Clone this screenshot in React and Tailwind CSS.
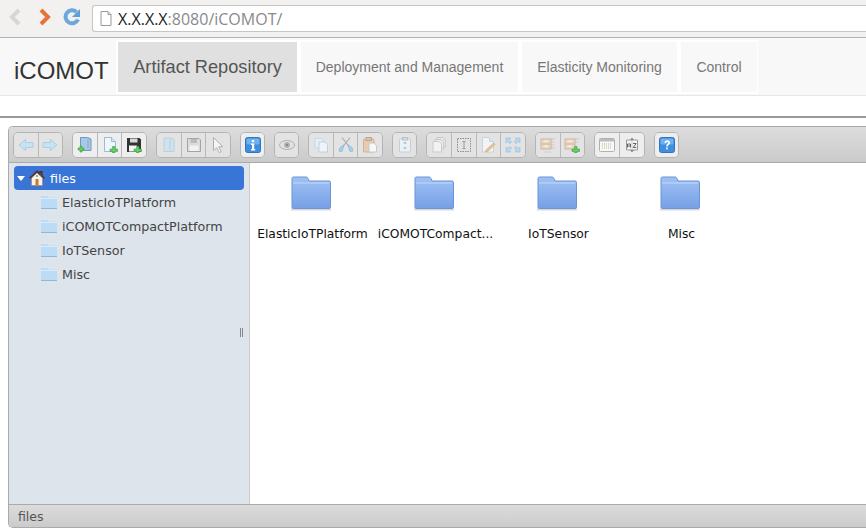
import React from 'react'

const Plus = () => <path d="M10.500 9.500h2.500v2.500h2.500v2.500h-2.500v1.500h-2.500v-1.500h-2.500v-2.500h2.500z" fill="#63cc63" stroke="#3fa34a" strokeWidth=".6" />

const icons = {
  back: <path d="M1 8l6.500-5.500v3h7.500v5h-7.500v3z" fill="#c8e2f0" stroke="#a8cfe4" />,
  forward: <path d="M15 8l-6.500-5.500v3h-7.500v5h7.500v3z" fill="#c8e2f0" stroke="#a8cfe4" />,
  mkdir: <><path d="M3.500.5h7l3.500 1.500v11.500h-10.500z" fill="#a8c8e6" stroke="#6a9ac4" /><path d="M11 2.500v9" stroke="#7fa8d0" /><path d="M3 9h2v2h2v2h-2v2h-2v-2h-2v-2h2z" fill="#63cc63" stroke="#3fa34a" strokeWidth=".6" /></>,
  mkfile: <><path d="M2.500.5h7l4 4v10h-11z" fill="#eef5fb" stroke="#9dbad2" /><path d="M9.500.5v4h4" fill="#d4e3ef" stroke="#9dbad2" /><Plus /></>,
  save: <><path d="M1 1h12.500l1.500 1.500v12.500h-14z" fill="#333" /><rect x="4" y="1.500" width="7.500" height="4" fill="#d8d8d8" /><rect x="3" y="8.500" width="8" height="6" fill="#f4f4f4" /><Plus /></>,
  open: <><path d="M3 1h6.500l3.500 1.500v12h-10z" fill="#d0e2ee" stroke="#b8cfde" /><path d="M9 2v12" stroke="#b8cfde" /></>,
  disk: <><path d="M1.500 1.500h11.500l1.500 1.500v11.500h-13z" fill="#dcdcdc" stroke="#a4a4a4" /><rect x="4.500" y="2" width="6.500" height="4" fill="#bcbcbc" /><rect x="3.500" y="8.500" width="9" height="5.500" fill="#f2f2f2" /></>,
  select: <path d="M3.500 .5v13l3.200-2.800 2.500 5 2-1-2.500-4.900h4.300z" fill="#f4f4f4" stroke="#b0b0b0" />,
  info: <><rect x=".5" y=".5" width="15" height="15" rx="2" fill="#3f8ee0" stroke="#2f74c0" /><rect x="1.500" y="1.500" width="13" height="6" rx="1.500" fill="#6fb0ee" /><rect x="6.800" y="3" width="2.400" height="2.200" fill="#fff" /><path d="M6 6.500h3.200v5.500h1v1.500h-4.200v-1.500h1v-4h-1z" fill="#fff" /></>,
  eye: <><ellipse cx="8" cy="8" rx="7.500" ry="4.500" fill="#e2e2e2" stroke="#b0b0b0" /><circle cx="8" cy="8" r="3" fill="#b4b4b4" /><circle cx="8" cy="8" r="1.300" fill="#8a8a8a" /></>,
  copy: <><path d="M2 1.500h6l2.500 2.500v7h-8.500z" fill="#e8eff4" stroke="#c8d6e0" /><path d="M6 5h6l2.500 2.500v7.500h-8.500z" fill="#f0f4f8" stroke="#c0d0da" /></>,
  cut: <><path d="M4 .5l7 9M12 .5l-7 9" stroke="#a4aeb6" strokeWidth="1.200" /><path d="M6 8l-4 2.500-1 3.500 3 .5zM10 8l4 2.500 1 3.500-3 .5z" fill="#a8d0ea" stroke="#84b4d4" strokeWidth=".7" /></>,
  paste: <><rect x="1.500" y="2" width="10.500" height="13" rx="1" fill="#e6ccb2" stroke="#d0b294" /><rect x="4" y=".5" width="5.500" height="3" fill="#d4c4b2" stroke="#bca890" /><path d="M7 6h5l2.500 2.500v6.500h-7.500z" fill="#f8f8f8" stroke="#c8c8c8" /></>,
  duplicate: <><rect x="2.500" y="2" width="11" height="13" rx="1" fill="#ecf1f5" stroke="#c4cfd8" /><rect x="5.500" y=".5" width="5" height="2.500" fill="#d4dbe0" stroke="#b8c2ca" /><path d="M6.500 6h3M8 4.800v2.400M6.500 11h3M8 9.800v2.400" stroke="#a0bcd4" /></>,
  pages: <><path d="M6 .5h6l2.500 2.500v7h-8.500z" fill="#e6e6e6" stroke="#c8c8c8" /><path d="M4 2.500h6l2.500 2.500v7h-8.500z" fill="#ececec" stroke="#c8c8c8" /><path d="M2 4.500h6l2.500 2.500v8h-8.500z" fill="#f0f2f4" stroke="#c8ccd0" /></>,
  rename: <><rect x="1.500" y="1.500" width="13" height="13" fill="none" stroke="#8c8c8c" strokeDasharray="1.500 1" /><path d="M6.500 4.500h3M6.500 11.500h3M8 4.500v7" stroke="#9a9a9a" /></>,
  edit: <><path d="M2.500 .5h7l4 4v10.500h-11z" fill="#f0f4f7" stroke="#c8d4dc" /><path d="M9.500 .5v4h4" fill="#dce4ea" stroke="#c8d4dc" /><path d="M6 13l7.500-7 1.500 1.500-7.500 7-2 .5z" fill="#ecc890" stroke="#c8a070" strokeWidth=".6" /></>,
  resize: <path d="M1 1h5l-1.600 1.600 2.300 2.300-1.800 1.800-2.300-2.300-1.600 1.600zM15 1v5l-1.600-1.600-2.300 2.300-1.800-1.800 2.300-2.300-1.600-1.600zM1 15v-5l1.600 1.600 2.300-2.300 1.800 1.800-2.300 2.300 1.600 1.600zM15 15h-5l1.600-1.600-2.300-2.300 1.800-1.800 2.300 2.300 1.600-1.600z" fill="#b4daf0" stroke="#90c0dc" strokeWidth=".6" />,
  archive: <><path d="M11 2h4M11 5h3M11 8h3M11 11h4" stroke="#c8c8c8" /><rect x="1" y="2" width="10" height="10" fill="#e8d8c2" stroke="#cdb89e" /><path d="M1 7h10" stroke="#cdb89e" /><rect x="4.500" y="3.500" width="3" height="1.500" fill="#faf4ea" /><rect x="4.500" y="8.500" width="3" height="1.500" fill="#faf4ea" /><path d="M4 15h7" stroke="#d0d0d0" /></>,
  extract: <><path d="M11 2h4M11 5h3" stroke="#c8c8c8" /><rect x="1" y="2" width="10" height="10" fill="#e8d8c2" stroke="#cdb89e" /><path d="M1 7h10" stroke="#cdb89e" /><rect x="4.500" y="3.500" width="3" height="1.500" fill="#faf4ea" /><rect x="4.500" y="8.500" width="3" height="1.500" fill="#faf4ea" /><Plus /></>,
  grid: <><rect x=".5" y="1.500" width="15" height="13" rx="1" fill="#f8f8f8" stroke="#b0b0b0" /><rect x="1" y="2" width="14" height="2.500" fill="#bcbcbc" /><path d="M3 7h10" stroke="#8fb4d8" strokeDasharray="1 1" /><path d="M3 9h10" stroke="#d8b878" strokeDasharray="1 1" /><path d="M3 11h10" stroke="#9ccc9c" strokeDasharray="1 1" /></>,
  sort: <><path d="M2.500 3h11v10h-11z" fill="#f4f4f4" stroke="#9a9a9a" /><path d="M8 .5l2 2.500h-4zM8 15.500l2-2.500h-4z" fill="#888" /><path d="M3.500 10.500v-3.500h3v3.500M3.500 9h3M9 6.500h3.200l-3 4h3.200" fill="none" stroke="#555" strokeWidth=".9" /><path d="M8 3v10" stroke="#aaa" strokeWidth=".5" /></>,
  help: <><rect x=".5" y=".5" width="15" height="15" rx="2" fill="#3f8ee0" stroke="#2f74c0" /><rect x="1.500" y="1.500" width="13" height="6" rx="1.500" fill="#6fb0ee" /><path d="M5.500 6c0-3.500 5.500-3.500 5.500-.2 0 2-2.200 2-2.200 3.700h-1.600c0-2.500 2-2.500 2-3.600 0-1.200-2-1.200-2.100.1z" fill="#fff" /><rect x="7.200" y="10.500" width="1.600" height="1.800" fill="#fff" /></>,
}

const toolbar = [
  { w: 'w-[50px]', items: [['back', true], ['forward', true]] },
  { w: 'w-[75px]', items: [['mkdir'], ['mkfile'], ['save']] },
  { w: 'w-[75px]', items: [['open', true], ['disk', true], ['select', true]] },
  { w: 'w-[25px]', items: [['info']] },
  { w: 'w-[25px]', items: [['eye', true]] },
  { w: 'w-[75px]', items: [['copy', true], ['cut', true], ['paste', true]] },
  { w: 'w-[25px]', items: [['duplicate', true]] },
  { w: 'w-[100px]', items: [['pages', true], ['rename', true], ['edit', true], ['resize', true]] },
  { w: 'w-[50px]', items: [['archive', true], ['extract', true]] },
  { w: 'w-[51px]', items: [['grid'], ['sort']] },
  { w: 'w-[25px]', items: [['help']] },
]

const folders = ['ElasticIoTPlatform', 'iCOMOTCompactPlatform', 'IoTSensor', 'Misc']
const gridNames = ['ElasticIoTPlatform', 'iCOMOTCompact...', 'IoTSensor', 'Misc']

function BigFolder() {
  return (
    <svg className="mr-[3px]" width="42" height="36" viewBox="0 0 42 36">
      <defs>
        <linearGradient id="bigfolder" x1="0" y1="0" x2="0" y2="1">
          <stop offset="0" stopColor="#a0c2f4" />
          <stop offset="1" stopColor="#76a0e6" />
        </linearGradient>
      </defs>
      <rect x="1" y="33.500" width="40" height="2" fill="#d8d8d8" />
      <path d="M2 3.500c0-1 .6-1.500 1.500-1.500h12.500c1 0 1.500.5 2 1.500l1 2.500h20c1 0 1.500.5 1.500 1.500v24.500c0 1-.5 1.500-1.500 1.500h-35.500c-1 0-1.500-.5-1.500-1.500z" fill="url(#bigfolder)" stroke="#6c93d6" />
      <path d="M3 8h36" stroke="#c4d9f8" />
    </svg>
  )
}

function SmallFolder() {
  return (
    <svg width="16" height="14" viewBox="0 0 16 14">
      <path d="M0 1h6l1.500 1.500h8.500v11.500h-16z" fill="#bcdcf6" />
      <path d="M0 3.500h16" stroke="#d8ebfa" />
      <path d="M0 13.500h16" stroke="#8fb8dc" />
    </svg>
  )
}

function HomeIcon() {
  return (
    <svg width="16" height="16" viewBox="0 0 16 16">
      <path d="M2.500 8v7.500h11v-7.500l-5.500-5z" fill="#fbf4e6" stroke="#a08a6c" strokeWidth=".7" />
      <path d="M.7 8.300l7.300-7 3 2.800v-2.300h2v4.200l2.300 2.300" fill="none" stroke="#5a2c1c" strokeWidth="1.400" />
      <rect x="6.500" y="9" width="3" height="6.500" fill="#c07c34" />
      <rect x="7" y="5" width="2" height="2" fill="#8aa8c8" />
    </svg>
  )
}

export default function App() {
  return (
    <div className="flex h-[528px] w-[866px] flex-col overflow-hidden bg-white font-['Liberation_Sans',sans-serif]">
      {/* browser chrome */}
      <div className="flex h-[38px] shrink-0 items-start border-b border-[#b4b4b2] bg-[#f2f1f0] pt-[5px]">
        <div className="flex w-[92px] items-center pt-[3px] pl-[8px]">
          <svg width="14" height="18" viewBox="0 0 14 18"><path d="M11 2l-7 7 7 7" fill="none" stroke="#d6d6d4" strokeWidth="4" /></svg>
          <svg className="ml-[16px]" width="14" height="18" viewBox="0 0 14 18"><path d="M3 2l7 7-7 7" fill="none" stroke="#e2743c" strokeWidth="4" /></svg>
          <svg className="ml-[11px]" width="18" height="18" viewBox="0 0 18 18"><path d="M15 11.500a6.500 6.500 0 1 1-1.500-7.500" fill="none" stroke="#6ca8dc" strokeWidth="4" /><path d="M17 1v8h-8z" fill="#5f9fd8" /></svg>
        </div>
        <div className="flex h-[27px] flex-1 items-center rounded-l-[3px] border border-r-0 border-[#c6c6c6] bg-white pl-[7px]">
          <svg width="12" height="15" viewBox="0 0 12 15"><path d="M1 .5h7l3 3v11h-10z" fill="#fff" stroke="#9a9a9a" /><path d="M8 .5v3h3" fill="#e4e4e4" stroke="#9a9a9a" /></svg>
          <span className="ml-[6px] font-['Open_Sans',sans-serif] text-[16px] text-[#222]">
            X.X.X.X<span className="text-[#8a8a8a]">:8080/iCOMOT/</span>
          </span>
        </div>
      </div>

      {/* app nav */}
      <div className="flex h-[58px] shrink-0 items-start border-b border-[#e7e7e7] bg-[#f8f8f8]">
        <div className="flex h-[57px] w-[116px] items-center pt-[9px] pl-[14px] text-[24px] text-[#333]">iCOMOT</div>
        <div className="mt-[2px] flex h-[54px] gap-[4px] bg-white px-[2px] pt-[2px] pr-[1px]">
          <div className="flex h-[50px] w-[179px] items-center justify-center bg-[#e0e0e0] pt-[2px] text-[18.200px] text-[#555]">Artifact Repository</div>
          <div className="flex h-[50px] w-[217px] items-center justify-center bg-[#f8f8f8] text-[14px] text-[#777]">Deployment and Management</div>
          <div className="flex h-[50px] w-[155px] items-center justify-center bg-[#f8f8f8] text-[14px] text-[#777]">Elasticity Monitoring</div>
          <div className="flex h-[50px] w-[76px] items-center justify-center bg-[#f8f8f8] text-[14px] text-[#777]">Control</div>
        </div>
      </div>

      <div className="h-[20px] shrink-0" />
      <div className="h-[2px] shrink-0 bg-[#999]" />
      <div className="h-[8px] shrink-0" />

      {/* file manager */}
      <div className="ml-[8px] flex min-h-0 flex-1 flex-col overflow-hidden rounded-l-[5px] border-y border-l border-[#aaa] font-['DejaVu_Sans',sans-serif]">
        <div className="flex h-[36px] shrink-0 gap-[9px] border-b border-[#aaa] bg-linear-to-b from-[#dcdcdc] to-[#cbcbcb] pt-[5px] pl-[4px]">
          {toolbar.map((group, i) => (
            <div key={i} className={`flex h-[26px] ${group.w} divide-x divide-[#b8b8b8] overflow-hidden rounded-[5px] border border-[#b4b4b4]`}>
              {group.items.map(([name, off]) => (
                <div key={name} className={`flex flex-1 items-center justify-center ${off ? 'bg-[#e3e3e3]' : 'bg-[#eeeeee]'}`}>
                  <svg width="16" height="16" viewBox="0 0 16 16">{icons[name]}</svg>
                </div>
              ))}
            </div>
          ))}
        </div>

        <div className="flex min-h-0 flex-1">
          <div className="relative w-[241px] shrink-0 border-r border-[#ccc] bg-[#dde4ec] px-[5px] pt-[3px] text-[12.700px] text-[#444]">
            <div className="flex h-[24px] items-center rounded-[4px] bg-[#3875d7] pl-[3px] text-white">
              <span className="h-0 w-0 border-x-[4px] border-t-[5px] border-x-transparent border-t-white" />
              <span className="ml-[4px]"><HomeIcon /></span>
              <span className="ml-[5px] pt-[1px]">files</span>
            </div>
            {folders.map((name) => (
              <div key={name} className="flex h-[24px] items-center pl-[27px]">
                <SmallFolder />
                <span className="ml-[5px] pt-[2px]">{name}</span>
              </div>
            ))}
            <div className="absolute top-[165px] right-[6px] flex gap-[1px]">
              <span className="h-[9px] w-[1px] bg-[#888]" />
              <span className="h-[9px] w-[1px] bg-[#888]" />
            </div>
          </div>
          <div className="flex flex-1 items-start bg-white pt-[12px] pl-[1px] text-[12.300px] text-[#111]">
            {gridNames.map((name) => (
              <div key={name} className="flex w-[123px] flex-col items-center">
                <BigFolder />
                <span className="mt-[14px] whitespace-nowrap">{name}</span>
              </div>
            ))}
          </div>
        </div>

        <div className="flex h-[23px] shrink-0 items-center border-t border-[#aaa] bg-linear-to-b from-[#dcdcdc] to-[#cbcbcb] pt-[2px] pl-[9px] text-[12.500px] text-[#555]">files</div>
      </div>
    </div>
  )
}
